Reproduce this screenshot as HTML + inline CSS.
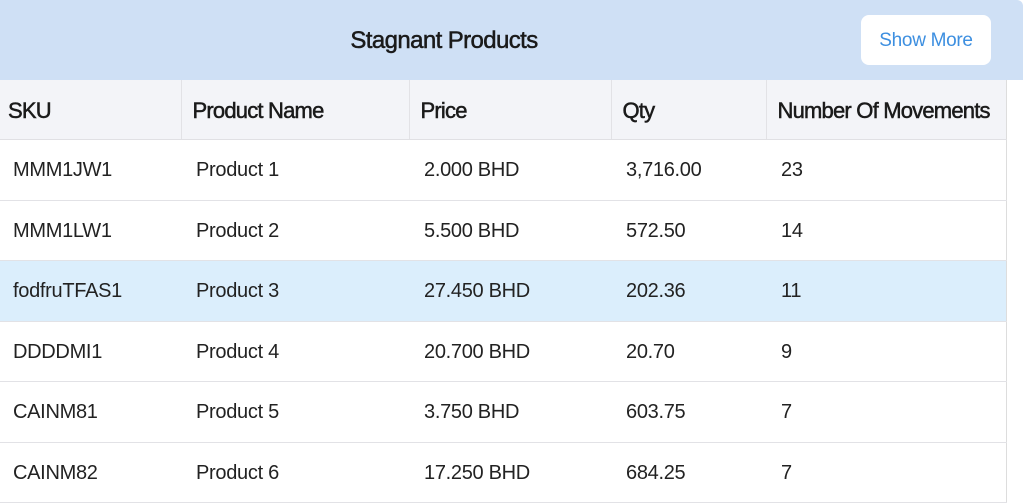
<!DOCTYPE html>
<html><head><style>
body{margin:0;width:1023px;height:504px;background:#fff;font-family:"Liberation Sans",sans-serif;overflow:hidden;position:relative}
.top{position:absolute;left:0;top:0;width:1023px;height:80px;background:#cfe0f5;border-top-right-radius:6px}
.title{position:absolute;left:0;width:888px;top:27px;text-align:center;font-size:24px;color:#1a1a1a;letter-spacing:-0.6px;-webkit-text-stroke:0.5px #1a1a1a}
.btn{position:absolute;left:861px;top:15px;width:130px;height:50px;background:#fff;border-radius:8px;color:#3d8fe0;font-size:19px;line-height:52px;text-align:center;letter-spacing:-0.3px}
table{position:absolute;left:0;top:80px;width:1007px;border-collapse:collapse;table-layout:fixed;border-right:1px solid #ddd}
th{background:#f3f4f8;height:57px;text-align:left;font-weight:normal;font-size:22px;color:#1a1a1a;padding:2px 0 0 11px;border-left:1px solid #e2e2e6;border-bottom:1px solid #e0e0e4;white-space:nowrap;overflow:hidden;letter-spacing:-0.8px;-webkit-text-stroke:0.5px #1a1a1a}
th:first-child{border-left:none;padding-left:8px}
td{height:57.5px;font-size:20px;color:#222;padding:2px 0 0 15px;border-bottom:1px solid #e2e2e6;letter-spacing:-0.3px}
td:first-child{padding-left:13px}
tr.hl td{background:#dbeefc}
</style></head><body>
<div class="top"><div class="title">Stagnant Products</div><div class="btn">Show More</div></div>
<table>
<colgroup><col style="width:181px"><col style="width:228px"><col style="width:202px"><col style="width:155px"><col></colgroup>
<tr><th>SKU</th><th>Product Name</th><th>Price</th><th>Qty</th><th>Number Of Movements</th></tr>
<tr><td>MMM1JW1</td><td>Product 1</td><td>2.000 BHD</td><td>3,716.00</td><td>23</td></tr>
<tr><td>MMM1LW1</td><td>Product 2</td><td>5.500 BHD</td><td>572.50</td><td>14</td></tr>
<tr class="hl"><td>fodfruTFAS1</td><td>Product 3</td><td>27.450 BHD</td><td>202.36</td><td>11</td></tr>
<tr><td>DDDDMI1</td><td>Product 4</td><td>20.700 BHD</td><td>20.70</td><td>9</td></tr>
<tr><td>CAINM81</td><td>Product 5</td><td>3.750 BHD</td><td>603.75</td><td>7</td></tr>
<tr><td>CAINM82</td><td>Product 6</td><td>17.250 BHD</td><td>684.25</td><td>7</td></tr>
</table>
</body></html>
